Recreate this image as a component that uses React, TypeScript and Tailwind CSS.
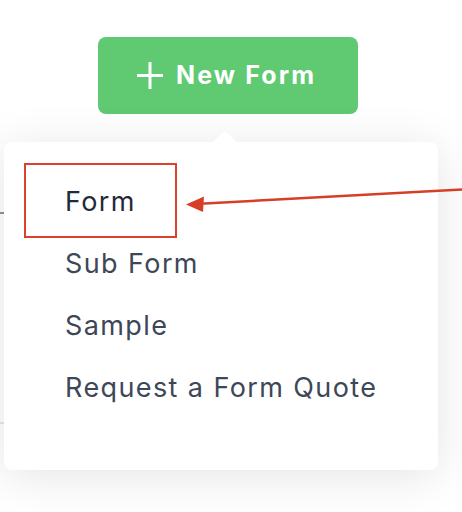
import React from "react";

export default function App() {
  const items = ["Form", "Sub Form", "Sample", "Request a Form Quote"];
  return (
    <div
      className="relative w-[462px] h-[512px] overflow-hidden bg-white"
      style={{ fontFamily: "Inter, 'Noto Sans', sans-serif" }}
    >
      {/* background table lines peeking out */}
      <div className="absolute left-0 top-[212px] w-[10px] h-[2px] bg-[#8b94a1]" />
      <div className="absolute left-0 top-[422px] w-[10px] h-[2px] bg-[#e4e6ea]" />

      <div className="relative flex flex-col">
        <div className="flex pt-[37px] pl-[98px]">
          <button className="flex items-center gap-[12px] pl-[38px] w-[260px] h-[77px] rounded-[8px] bg-[#5fca72] text-white">
            <svg width="28" height="29" viewBox="0 0 28 29" fill="none">
              <path d="M14 1v27M1 14.5h26" stroke="white" strokeWidth="3" />
            </svg>
            <span className="text-[25px] font-bold tracking-[2.1px]">New Form</span>
          </button>
        </div>

        <div className="relative ml-[4px] mt-[28px] w-[434px] h-[328px] rounded-[8px] bg-white shadow-[0_6px_48px_rgba(0,0,0,0.11)]">
          <svg
            className="absolute left-[208px] top-[-11px]"
            width="26"
            height="12"
            viewBox="0 0 26 12"
          >
            <path d="M0 12 L13 0 L26 12 Z" fill="white" />
          </svg>
          <div className="flex flex-col pt-[29px]">
            {items.map((t, i) => (
              <div
                key={t}
                className={`flex items-center h-[62px] pl-[61px] text-[27px] tracking-[1.4px] ${
                  i === 0 ? "text-[#1f2a3a]" : "text-[#3d4758]"
                }`}
              >
                {t}
              </div>
            ))}
          </div>
        </div>
      </div>

      {/* annotation box */}
      <div className="absolute left-[24px] top-[163px] w-[153px] h-[75px] border-[2.5px] border-[#d9432b]" />
      {/* annotation arrow */}
      <svg className="absolute left-0 top-0" width="462" height="512" viewBox="0 0 462 512">
        <line x1="463" y1="189.5" x2="200" y2="203.7" stroke="#d63e27" strokeWidth="2.5" />
        <polygon points="186,204.5 204,196.5 203,212" fill="#d63e27" />
      </svg>
    </div>
  );
}
